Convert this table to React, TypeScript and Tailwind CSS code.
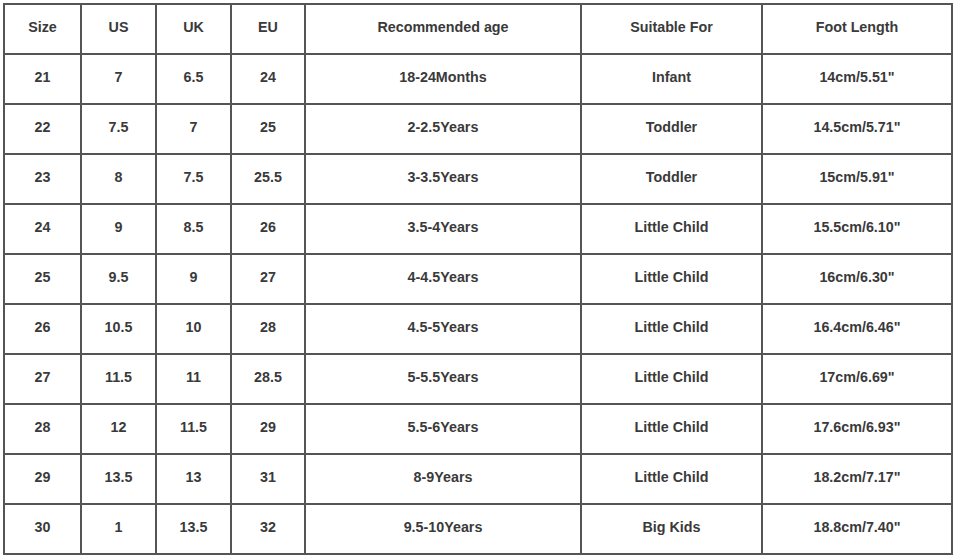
const header = ["Size", "US", "UK", "EU", "Recommended age", "Suitable For", "Foot Length"]

const rows = [
  ["21", "7", "6.5", "24", "18-24Months", "Infant", "14cm/5.51\""],
  ["22", "7.5", "7", "25", "2-2.5Years", "Toddler", "14.5cm/5.71\""],
  ["23", "8", "7.5", "25.5", "3-3.5Years", "Toddler", "15cm/5.91\""],
  ["24", "9", "8.5", "26", "3.5-4Years", "Little Child", "15.5cm/6.10\""],
  ["25", "9.5", "9", "27", "4-4.5Years", "Little Child", "16cm/6.30\""],
  ["26", "10.5", "10", "28", "4.5-5Years", "Little Child", "16.4cm/6.46\""],
  ["27", "11.5", "11", "28.5", "5-5.5Years", "Little Child", "17cm/6.69\""],
  ["28", "12", "11.5", "29", "5.5-6Years", "Little Child", "17.6cm/6.93\""],
  ["29", "13.5", "13", "31", "8-9Years", "Little Child", "18.2cm/7.17\""],
  ["30", "1", "13.5", "32", "9.5-10Years", "Big Kids", "18.8cm/7.40\""],
]

export default function App() {
  return (
    <div className="w-[956px] h-[557px] bg-white pt-[3px] pl-[3px] font-['Liberation_Sans',Arial,sans-serif]">
      <div className="w-[950px] grid grid-cols-[75px_73px_73px_72px_274px_179px_188px] auto-rows-[48px] gap-[2px] p-[2px] bg-[#555]">
        {[header, ...rows].map((row, i) =>
          row.map((cell, j) => (
            <div
              key={`${i}-${j}`}
              className="bg-white flex items-center justify-center pb-[4px] text-[14.3px] font-bold text-[#3a3a3a] leading-none"
            >
              {cell}
            </div>
          ))
        )}
      </div>
    </div>
  )
}
